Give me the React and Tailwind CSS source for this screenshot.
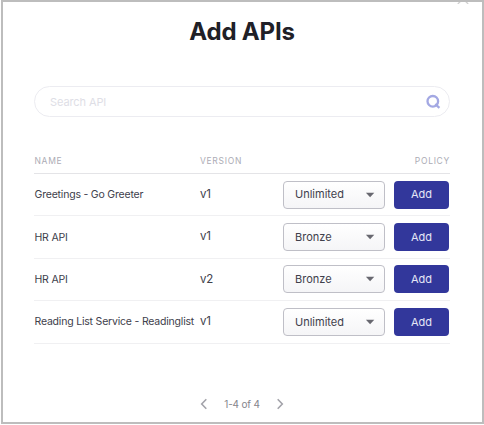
const apis = [
  { name: 'Greetings - Go Greeter', version: 'v1', policy: 'Unlimited' },
  { name: 'HR API', version: 'v1', policy: 'Bronze' },
  { name: 'HR API', version: 'v2', policy: 'Bronze' },
  { name: 'Reading List Service - Readinglist', version: 'v1', policy: 'Unlimited' },
];

function SearchBox() {
  return (
    <div className="mt-[38px] flex h-[31px] items-center justify-between rounded-full border border-[#ececf1] pr-[8px] pl-[15px]">
      <span className="text-[11px] leading-4 tracking-[-0.1px] text-[#dedee6]">Search API</span>
      <svg width="16" height="16" viewBox="0 0 16 16" fill="none" stroke="#a3a8e3" strokeWidth="2.3">
        <circle cx="7.8" cy="7.3" r="5.3" />
        <path d="M10.2 10.2 L14.4 13.9" />
      </svg>
    </div>
  );
}

function ApiRow({ name, version, policy }) {
  return (
    <div className="flex h-[42.4px] items-center border-b border-[#f0f0f2] text-[#40404b]">
      <span className="w-[166px] shrink-0 pt-px pl-[0.5px] text-[10.5px] tracking-[-0.2px] whitespace-nowrap">{name}</span>
      <span className="w-[83px] shrink-0 text-[11.5px] tracking-[-0.3px]">{version}</span>
      <button className="flex h-7 w-[102px] shrink-0 items-center justify-between rounded-[4px] border border-[#bfbfc7] bg-linear-to-b from-white to-[#f5f5f7] pr-[9px] pl-[11px] text-[11px]">
        <span>{policy}</span>
        <svg width="10" height="6" viewBox="0 0 10 6" fill="#686870">
          <path d="M.9 .7 H9.3 L5.1 5.2 Z" />
        </svg>
      </button>
      <button className="ml-[9px] h-7 w-[55px] shrink-0 rounded-[4px] bg-[#32379b] text-[11px] text-[#e5e6f6]">Add</button>
    </div>
  );
}

function Chevron({ d }) {
  return (
    <svg width="8" height="12" viewBox="0 0 8 12" fill="none" stroke="#a3a3aa" strokeWidth="1.6">
      <path d={d} />
    </svg>
  );
}

export default function App() {
  return (
    <div className="h-[425px] w-[484px] bg-white pl-px font-['Inter',sans-serif]">
      <div className="relative h-[424px] w-[483px] overflow-hidden border-2 border-[#bdbdbd] pt-[14px] pr-[32px] pl-[31px]">
        <svg className="absolute -top-[1px] left-[453px]" width="14" height="3" viewBox="0 0 14 3" fill="none" stroke="#d0d0d0" strokeWidth="1.3">
          <path d="M1.8 3 L4.8 0 M9.2 0 L12.2 3" />
        </svg>
        <h1 className="text-center text-[24px] leading-8 font-bold tracking-[-0.2px] text-[#202027]">Add APIs</h1>
        <SearchBox />
        <div className="mt-[31px] flex h-[26px] items-center border-b border-[#e4e4e7] pt-px text-[8.5px] tracking-[0.7px] text-[#acacb5]">
          <span className="w-[166px] pl-[0.5px]">NAME</span>
          <span>VERSION</span>
          <span className="ml-auto">POLICY</span>
        </div>
        {apis.map((api, index) => (
          <ApiRow key={index} {...api} />
        ))}
        <div className="mt-[52px] flex items-center justify-center gap-4 text-[10px] leading-4 tracking-[-0.2px] text-[#85858c]">
          <Chevron d="M6.3 1.3 L1.7 6 L6.3 10.7" />
          <span>1-4 of 4</span>
          <Chevron d="M1.7 1.3 L6.3 6 L1.7 10.7" />
        </div>
      </div>
    </div>
  );
}
